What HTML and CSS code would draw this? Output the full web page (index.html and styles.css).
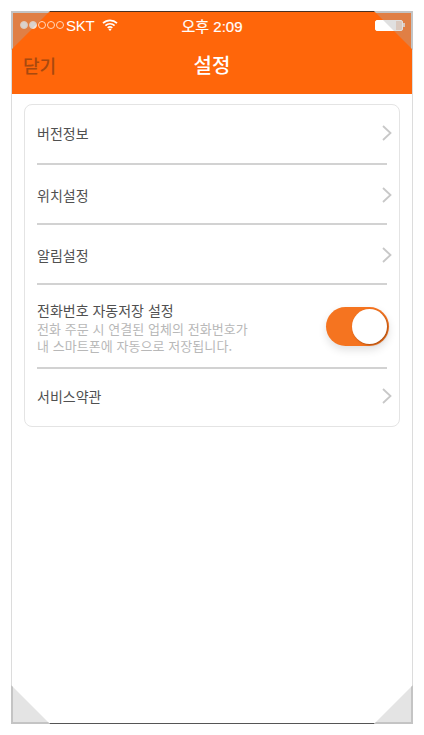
FILE: index.html
```html
<!DOCTYPE html>
<html lang="ko">
<head>
<meta charset="utf-8">
<title>설정</title>
<link rel="stylesheet" href="styles.css">
</head>
<body>
<div class="phone">
  <header class="head">
    <div class="status">
      <div class="signal"><i class="on"></i><i class="on"></i><i></i><i></i><i></i></div>
      <span class="carrier">SKT</span>
      <svg class="wifi" width="16" height="12" viewBox="0 0 16 12"><path d="M1 4.2a10 10 0 0 1 14 0M3.4 6.6a6.6 6.6 0 0 1 9.2 0M5.7 8.9a3.3 3.3 0 0 1 4.6 0" fill="none" stroke="#fff" stroke-width="1.7"/><path d="M8 12l-1.5-1.6a2 2 0 0 1 3 0z" fill="#fff"/></svg>
      <span class="time">오후 2:09</span>
      <div class="battery"><b></b></div>
      <span class="nub"></span>
    </div>
    <div class="nav">
      <span class="close">닫기</span>
      <h1 class="title">설정</h1>
    </div>
  </header>
  <main class="card">
    <div class="row row-first"><span class="label">버전정보</span><svg class="chev" width="10" height="16" viewBox="0 0 10 16"><path d="M1 1l7.5 7L1 15" fill="none" stroke="#c8c8c8" stroke-width="1.8"/></svg></div>
    <div class="row row-mid"><span class="label">위치설정</span><svg class="chev" width="10" height="16" viewBox="0 0 10 16"><path d="M1 1l7.5 7L1 15" fill="none" stroke="#c8c8c8" stroke-width="1.8"/></svg></div>
    <div class="row row-mid"><span class="label">알림설정</span><svg class="chev" width="10" height="16" viewBox="0 0 10 16"><path d="M1 1l7.5 7L1 15" fill="none" stroke="#c8c8c8" stroke-width="1.8"/></svg></div>
    <div class="row row-tall">
      <div class="info">
        <span class="label">전화번호 자동저장 설정</span>
        <span class="desc">전화 주문 시 연결된 업체의 전화번호가<br>내 스마트폰에 자동으로 저장됩니다.</span>
      </div>
      <div class="toggle"><span class="knob"></span></div>
    </div>
    <div class="row row-last"><span class="label">서비스약관</span><svg class="chev" width="10" height="16" viewBox="0 0 10 16"><path d="M1 1l7.5 7L1 15" fill="none" stroke="#c8c8c8" stroke-width="1.8"/></svg></div>
  </main>
  <div class="fold fold-tl"></div>
  <div class="fold fold-tr"></div>
  <div class="fold fold-bl"></div>
  <div class="fold fold-br"></div>
</div>
</body>
</html>
```
FILE: styles.css
```css
html, body { margin: 0; padding: 0; background: #fff; }
body { font-family: "Liberation Sans", "Noto Sans CJK KR", sans-serif; height: 735px; overflow: hidden; }
.phone { position: relative; box-sizing: border-box; width: 402px; height: 713px; margin: 11px 0 0 11px; border-left: 1px solid #dcdcdc; border-right: 1px solid #dcdcdc; border-bottom: 1px solid #555; border-top: 1px solid #4a3020; }
.head { background: #ff660a; height: 82px; box-sizing: border-box; color: #fff; }
.status { display: flex; align-items: center; height: 26px; padding: 0 7px 0 8px; position: relative; }
.signal { display: flex; gap: 1px; width: 44px; }
.signal i { box-sizing: border-box; width: 8px; height: 8px; border-radius: 50%; border: 1px solid #ffd9bf; }
.signal i.on { background: #f4e9e2; }
.carrier { font-size: 15px; margin-left: 2px; letter-spacing: -0.2px; }
.wifi { margin-left: 7px; }
.time { position: absolute; left: 0; right: 0; text-align: center; font-size: 15px; -webkit-text-stroke: 0.2px #fff; }
.battery { margin-left: auto; width: 28px; height: 11px; box-sizing: border-box; border: 1px solid #fff; border-radius: 2px; background: #f6d9c8; }
.battery b { display: block; width: 20px; height: 100%; background: #fff; }
.nub { width: 2px; height: 4px; background: #f6d9c8; }
.nav { position: relative; height: 55px; display: flex; align-items: center; padding-bottom: 1px; box-sizing: border-box; }
.close { margin-left: 11px; font-size: 18px; font-weight: 500; color: #a8490f; font-family: "Noto Sans CJK KR", sans-serif; }
.title { position: absolute; left: 0; right: 0; top: 2px; margin: 0; text-align: center; font-size: 20px; font-weight: 500; font-family: "Noto Sans CJK KR", sans-serif; line-height: 50px; }
.card { margin: 10px 12px 0 12px; box-sizing: border-box; height: 323px; border: 1px solid #e4e4e4; border-radius: 8px; padding: 0 12px; }
.row { display: flex; align-items: center; justify-content: space-between; height: 60px; border-bottom: 2px solid #d2d2d2; box-sizing: border-box; }
.row-first { padding-bottom: 2px; }
.row-mid { padding-top: 1px; }
.row-tall { height: 84px; align-items: flex-start; }
.row-last { border-bottom: 0; height: 58px; padding-bottom: 4px; }
.label { font-size: 14px; color: #505050; font-family: "Noto Sans CJK KR", sans-serif; line-height: 18px; }
.chev { margin-right: -5px; }
.info { display: flex; flex-direction: column; padding-top: 16px; }
.desc { font-size: 13px; letter-spacing: 0.06px; color: #b8b8b8; line-height: 17px; margin-top: 1px; font-family: "Noto Sans CJK KR", sans-serif; }
.toggle { width: 63px; height: 39px; border-radius: 20px; background: #f57420; margin: 22px -2px 0 0; position: relative; box-shadow: 0 4px 8px rgba(0,0,0,.12); }
.knob { position: absolute; right: 2px; top: 2px; width: 35px; height: 35px; border-radius: 50%; background: #fff; box-shadow: 1px 1px 2px rgba(120,50,0,.6); }
.fold { position: absolute; width: 39px; height: 39px; box-sizing: border-box; border: 2px solid #c4c4c4; }
.fold-tl { left: -1px; top: -1px; background: rgba(172,172,172,.37); clip-path: polygon(0 0, 100% 0, 0 100%); }
.fold-tr { right: -1px; top: -1px; background: rgba(172,172,172,.37); clip-path: polygon(0 0, 100% 0, 100% 100%); }
.fold-bl { left: -1px; bottom: -1px; background: #e4e4e4; clip-path: polygon(0 0, 100% 100%, 0 100%); }
.fold-br { right: -1px; bottom: -1px; background: #e4e4e4; clip-path: polygon(100% 0, 100% 100%, 0 100%); }
```
